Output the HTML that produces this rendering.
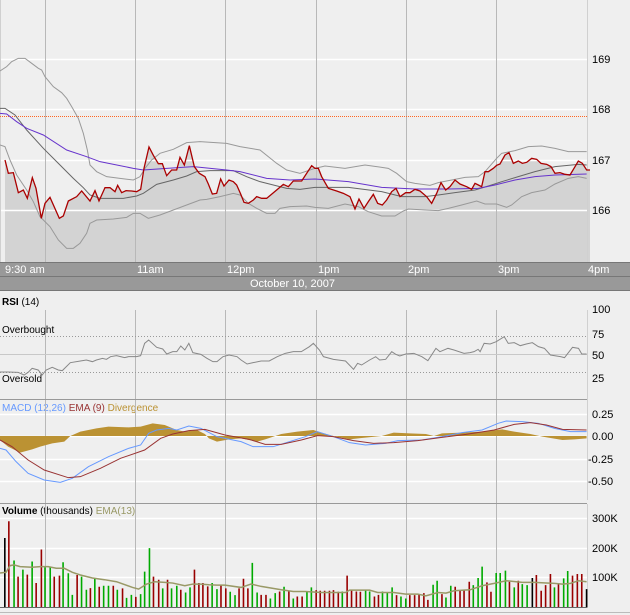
<!DOCTYPE html>
<html><head><meta charset="utf-8"><style>
html,body{margin:0;padding:0;background:#efefef;}
svg{display:block;font-family:"Liberation Sans",sans-serif;}
</style></head><body>
<svg width="630" height="615" viewBox="0 0 630 615" xmlns="http://www.w3.org/2000/svg">
<rect width="630" height="615" fill="#efefef"/>
<!-- main price area fill -->
<g transform="scale(0.33333)">
<polygon fill="#d3d3d3" points="15,786 15,480 25,520 40,518 55,578 70,570 82,595 97,533 108,565 124,655 135,610 150,592 178,655 190,648 205,603 230,590 245,573 270,603 285,572 297,603 315,563 330,563 345,575 353,556 365,578 378,572 395,573 410,575 422,568 432,505 447,441 460,466 475,491 487,491 500,527 515,510 530,510 540,472 553,495 568,437 583,500 598,520 615,530 625,552 637,582 650,580 662,537 672,558 687,540 700,545 710,555 722,582 732,607 745,610 760,600 770,590 785,595 800,595 830,570 850,553 865,560 880,543 905,543 935,497 945,505 955,505 965,530 985,565 1010,573 1030,580 1050,590 1065,627 1077,597 1092,625 1105,605 1120,583 1133,610 1147,615 1160,600 1175,575 1188,565 1200,590 1217,578 1230,578 1245,568 1260,573 1280,590 1295,610 1310,580 1323,548 1337,570 1350,560 1365,540 1380,552 1400,560 1415,568 1425,550 1435,555 1445,560 1455,515 1465,515 1480,505 1490,496 1500,492 1515,465 1527,458 1540,490 1555,483 1567,490 1580,487 1595,475 1610,478 1623,490 1640,493 1653,500 1665,520 1680,518 1695,523 1710,525 1725,500 1735,483 1747,490 1760,510 1770,510 1770,786"/>
</g>
<!-- grid -->
<g stroke="#ffffff" stroke-width="1.5">
<line x1="0" y1="59.5" x2="587" y2="59.5"/><line x1="0" y1="109.5" x2="587" y2="109.5"/><line x1="0" y1="160.5" x2="587" y2="160.5"/><line x1="0" y1="210.5" x2="587" y2="210.5"/>
</g>
<g stroke="#b8b8b8" stroke-width="1">
<line x1="45.5" y1="0" x2="45.5" y2="262"/><line x1="135.5" y1="0" x2="135.5" y2="262"/><line x1="225.5" y1="0" x2="225.5" y2="262"/><line x1="316.5" y1="0" x2="316.5" y2="262"/><line x1="406.5" y1="0" x2="406.5" y2="262"/><line x1="496.5" y1="0" x2="496.5" y2="262"/><line x1="587.5" y1="0" x2="587.5" y2="262" stroke="#d0d0d0"/>
<line x1="0.5" y1="0" x2="0.5" y2="262" stroke="#d0d0d0"/>
</g>
<line x1="0" y1="116.5" x2="587" y2="116.5" stroke="#ff6622" stroke-dasharray="1,1"/>
<g transform="scale(0.33333)" fill="none" stroke-width="1" vector-effect="non-scaling-stroke">
<polyline vector-effect="non-scaling-stroke" stroke="#999" points="0,213 20,200 35,185 55,175 75,175 95,190 115,205 125,210 135,230 160,260 185,278 200,295 215,320 235,355 250,400 262,450 270,495 290,515 320,530 360,535 400,540 420,530 435,505 455,480 480,460 520,448 560,428 600,425 680,430 720,440 780,450 830,490 860,510 900,520 945,505 975,498 1035,505 1095,495 1165,505 1190,520 1220,545 1245,550 1290,556 1315,548 1355,540 1395,532 1435,530 1455,515 1490,475 1505,460 1545,452 1585,440 1625,438 1665,445 1705,455 1760,455"/>
<polyline vector-effect="non-scaling-stroke" stroke="#999" points="0,435 15,440 30,480 50,525 80,570 100,605 120,650 150,680 175,720 200,745 220,745 240,730 260,700 270,670 290,660 340,657 380,652 400,640 420,640 445,655 480,645 520,630 560,615 600,600 620,598 660,590 700,580 720,585 745,610 770,625 800,640 825,640 840,625 870,620 920,618 945,622 985,625 1035,612 1075,620 1105,635 1145,648 1185,648 1210,633 1225,627 1275,630 1315,632 1345,625 1385,615 1430,603 1455,612 1490,612 1520,622 1535,615 1565,590 1595,578 1635,570 1665,552 1705,535 1735,530 1760,535"/>
<polyline vector-effect="non-scaling-stroke" stroke="#666" points="0,325 15,325 45,345 80,390 130,445 180,495 220,535 250,563 270,585 300,595 370,595 410,588 430,580 470,553 520,540 560,528 590,515 630,512 700,512 740,530 780,545 820,555 860,565 900,568 945,562 1045,562 1145,575 1205,590 1275,590 1315,585 1365,578 1425,570 1465,558 1505,545 1555,530 1605,515 1665,500 1735,493 1760,495"/>
<polyline vector-effect="non-scaling-stroke" stroke="#6633cc" points="0,340 20,342 50,365 80,385 130,405 200,450 260,470 300,485 400,505 430,510 500,505 580,500 680,510 720,515 800,535 870,540 945,537 1045,545 1145,562 1245,567 1345,567 1435,565 1485,555 1545,540 1605,530 1665,525 1760,522"/>
<polyline vector-effect="non-scaling-stroke" stroke="#aa0000" stroke-width="1.3" points="15,480 25,520 40,518 55,578 70,570 82,595 97,533 108,565 124,655 135,610 150,592 178,655 190,648 205,603 230,590 245,573 270,603 285,572 297,603 315,563 330,563 345,575 353,556 365,578 378,572 395,573 410,575 422,568 432,505 447,441 460,466 475,491 487,491 500,527 515,510 530,510 540,472 553,495 568,437 583,500 598,520 615,530 625,552 637,582 650,580 662,537 672,558 687,540 700,545 710,555 722,582 732,607 745,610 760,600 770,590 785,595 800,595 830,570 850,553 865,560 880,543 905,543 935,497 945,505 955,505 965,530 985,565 1010,573 1030,580 1050,590 1065,627 1077,597 1092,625 1105,605 1120,583 1133,610 1147,615 1160,600 1175,575 1188,565 1200,590 1217,578 1230,578 1245,568 1260,573 1280,590 1295,610 1310,580 1323,548 1337,570 1350,560 1365,540 1380,552 1400,560 1415,568 1425,550 1435,555 1445,560 1455,515 1465,515 1480,505 1490,496 1500,492 1515,465 1527,458 1540,490 1555,483 1567,490 1580,487 1595,475 1610,478 1623,490 1640,493 1653,500 1665,520 1680,518 1695,523 1710,525 1725,500 1735,483 1747,490 1760,510 1770,510"/>
</g>
<g font-size="11" fill="#000"><text x="592" y="63">169</text><text x="592" y="113">168</text><text x="592" y="164">167</text><text x="592" y="214">166</text></g>
<!-- time axis -->
<rect x="0" y="262" width="630" height="14" fill="#999"/>
<rect x="0" y="276" width="630" height="14" fill="#999"/>
<line x1="0" y1="262.5" x2="630" y2="262.5" stroke="#777"/>
<line x1="0" y1="276.5" x2="630" y2="276.5" stroke="#777"/>
<line x1="0" y1="290.5" x2="630" y2="290.5" stroke="#777"/>
<g font-size="11" fill="#fff"><text x="5" y="273">9:30 am</text><text x="137" y="273">11am</text><text x="227" y="273">12pm</text><text x="318" y="273">1pm</text><text x="408" y="273">2pm</text><text x="498" y="273">3pm</text><text x="588" y="273">4pm</text><text x="250" y="287">October 10, 2007</text></g>
<!-- RSI -->
<text x="2" y="305" font-size="10"><tspan font-weight="bold">RSI</tspan> (14)</text>
<g stroke="#b8b8b8"><line x1="45.5" y1="310" x2="45.5" y2="399"/><line x1="135.5" y1="310" x2="135.5" y2="399"/><line x1="225.5" y1="310" x2="225.5" y2="399"/><line x1="316.5" y1="310" x2="316.5" y2="399"/><line x1="406.5" y1="310" x2="406.5" y2="399"/><line x1="496.5" y1="310" x2="496.5" y2="399"/><line x1="587.5" y1="310" x2="587.5" y2="500" stroke="#d0d0d0"/></g>
<line x1="0" y1="336.5" x2="587" y2="336.5" stroke="#999" stroke-dasharray="1,2"/>
<line x1="0" y1="372.5" x2="587" y2="372.5" stroke="#999" stroke-dasharray="1,2"/>
<line x1="0" y1="354.5" x2="587" y2="354.5" stroke="#c8c8c8"/>
<line x1="0" y1="399.5" x2="587" y2="399.5" stroke="#999"/>
<text x="2" y="333" font-size="10">Overbought</text><text x="2" y="382" font-size="10">Oversold</text>
<g font-size="11"><text x="592" y="313">100</text><text x="592" y="338">75</text><text x="592" y="359">50</text><text x="592" y="382">25</text></g>
<g transform="translate(0,290) scale(0.40177,0.33333)"><polyline vector-effect="non-scaling-stroke" fill="none" stroke="#888" points="0,246 20,246 45,247 60,255 70,247 80,235 95,240 105,255 115,240 130,232 145,240 155,242 175,218 200,213 215,210 230,215 240,210 255,205 265,208 275,200 290,197 300,200 310,203 320,200 340,200 350,197 360,160 370,150 390,172 405,177 415,192 430,185 440,185 450,168 460,180 470,160 480,188 500,193 515,205 530,215 540,215 555,200 570,195 590,200 600,210 615,222 630,218 650,213 670,213 690,200 710,190 730,185 750,185 770,170 780,160 795,180 805,200 830,208 860,213 880,238 890,220 900,225 920,210 935,200 945,210 960,208 975,185 985,193 995,198 1010,192 1030,190 1050,200 1065,212 1085,175 1095,185 1115,175 1130,180 1155,190 1170,188 1180,185 1190,178 1195,185 1205,160 1220,162 1235,155 1255,140 1265,160 1280,158 1295,167 1310,162 1325,158 1340,170 1355,175 1370,195 1395,200 1405,203 1425,172 1440,175 1448,192 1460,192"/></g>
<!-- MACD -->
<text x="2" y="411" font-size="10"><tspan fill="#6699ff">MACD (12,26)</tspan> <tspan fill="#993333">EMA (9)</tspan> <tspan fill="#bb9233">Divergence</tspan></text>
<g stroke="#fff" stroke-width="1.5"><line x1="0" y1="414.5" x2="587" y2="414.5"/><line x1="0" y1="436.5" x2="587" y2="436.5"/><line x1="0" y1="459.5" x2="587" y2="459.5"/><line x1="0" y1="481.5" x2="587" y2="481.5"/></g>
<g stroke="#b8b8b8"><line x1="45.5" y1="400" x2="45.5" y2="503"/><line x1="135.5" y1="400" x2="135.5" y2="503"/><line x1="225.5" y1="400" x2="225.5" y2="503"/><line x1="316.5" y1="400" x2="316.5" y2="503"/><line x1="406.5" y1="400" x2="406.5" y2="503"/><line x1="496.5" y1="400" x2="496.5" y2="503"/></g>
<g font-size="11"><text x="592" y="418">0.25</text><text x="592" y="440">0.00</text><text x="588" y="463">-0.25</text><text x="588" y="485">-0.50</text></g>
<g transform="translate(0,290) scale(0.40177,0.33333)">
<polygon fill="#bb9233" points="0,438 0,450 20,470 50,488 80,478 100,470 130,460 160,455 175,438 200,425 240,415 270,410 320,412 350,410 380,400 410,405 440,420 460,425 490,420 510,432 520,445 540,455 570,448 600,445 640,455 660,448 700,432 740,425 780,420 800,428 830,438 870,448 900,444 950,438 980,428 1020,430 1060,432 1080,438 1100,430 1150,428 1200,425 1250,418 1280,425 1320,432 1350,440 1400,450 1430,448 1460,445 1460,438"/>
<polyline vector-effect="non-scaling-stroke" fill="none" stroke="#6699ff" points="0,475 15,480 40,515 70,550 110,570 150,577 180,565 220,530 270,500 320,475 350,465 370,430 390,420 420,415 440,420 470,408 500,415 540,440 560,445 600,455 630,470 680,470 720,455 760,440 790,425 830,440 870,458 910,465 960,460 990,452 1050,450 1100,440 1150,428 1200,420 1240,400 1260,393 1300,395 1340,400 1380,415 1420,425 1460,425"/>
<polyline vector-effect="non-scaling-stroke" fill="none" stroke="#993333" points="0,450 30,470 70,510 110,540 170,563 200,560 250,535 300,505 360,480 400,445 430,432 470,422 510,418 560,435 620,448 660,463 700,463 750,450 790,437 830,440 880,452 930,460 980,458 1040,452 1100,442 1160,433 1230,420 1280,403 1320,398 1360,405 1400,418 1460,420"/>
</g>
<line x1="0" y1="503.5" x2="587" y2="503.5" stroke="#999"/>
<!-- Volume -->
<text x="2" y="514" font-size="10"><tspan font-weight="bold">Volume</tspan> (thousands) <tspan fill="#999966">EMA(13)</tspan></text>
<g stroke="#fff" stroke-width="1.5"><line x1="0" y1="518.5" x2="587" y2="518.5"/><line x1="0" y1="548.5" x2="587" y2="548.5"/><line x1="0" y1="577.5" x2="587" y2="577.5"/></g>
<g stroke="#b8b8b8"><line x1="45.5" y1="504" x2="45.5" y2="607"/><line x1="135.5" y1="504" x2="135.5" y2="607"/><line x1="225.5" y1="504" x2="225.5" y2="607"/><line x1="316.5" y1="504" x2="316.5" y2="607"/><line x1="406.5" y1="504" x2="406.5" y2="607"/><line x1="496.5" y1="504" x2="496.5" y2="607"/><line x1="587.5" y1="504" x2="587.5" y2="607" stroke="#d0d0d0"/></g>
<g font-size="11"><text x="592" y="522">300K</text><text x="592" y="552">200K</text><text x="592" y="581">100K</text></g>
<g transform="translate(0,495) scale(0.40177,0.3361)" stroke-width="1.6">
<g stroke="#000"><path vector-effect="non-scaling-stroke" d="M12 335V128M1325 335V247M1460 335V280"/></g>
<g stroke="#990000"><path vector-effect="non-scaling-stroke" d="M22 335V78M45 335V243M68 335V237M90 335V262M103 335V162M135 335V243M148 335V240M192 335V238M225 335V277M247 335V273M282 335V270M305 335V278M338 335V303M382 335V243M395 335V252M417 335V252M450 335V282M484 335V222M495 335V262M505 335V262M517 335V272M550 335V268M562 335V278M595 335V278M606 335V249M617 335V278M650 335V297M662 335V297M696 335V287M719 335V285M740 335V302M752 335V302M787 335V283M797 335V285M808 335V285M820 335V285M830 335V283M842 335V288M864 335V240M875 335V283M887 335V287M897 335V288M932 335V302M942 335V297M987 335V298M1020 335V298M1032 335V298M1043 335V297M1055 335V292M1065 335V312M1100 335V295M1133 335V273M1145 335V283M1155 335V283M1168 335V258M1212 335V260M1222 335V288M1268 335V258M1290 335V255M1335 335V238M1347 335V285M1358 335V268M1370 335V235M1390 335V263M1425 335V240M1437 335V235M1448 335V235"/></g>
<g stroke="#00aa00"><path vector-effect="non-scaling-stroke" d="M35 335V195M57 335V222M80 335V198M112 335V215M125 335V215M157 335V200M170 335V233M180 335V297M203 335V243M215 335V282M236 335V248M258 335V270M270 335V270M292 335V282M315 335V306M327 335V297M350 335V295M360 335V228M372 335V158M405 335V278M427 335V278M440 335V270M462 335V290M473 335V275M528 335V262M540 335V280M573 335V288M585 335V298M628 335V202M640 335V290M673 335V308M685 335V292M707 335V273M730 335V308M764 335V287M775 335V275M852 335V287M910 335V283M920 335V287M952 335V287M964 335V290M976 335V275M998 335V302M1010 335V308M1078 335V267M1088 335V255M1110 335V305M1122 335V270M1178 335V268M1190 335V247M1200 335V213M1235 335V232M1245 335V232M1258 335V225M1280 335V275M1300 335V265M1312 335V268M1380 335V275M1403 335V248M1413 335V226"/></g>
<polyline vector-effect="non-scaling-stroke" fill="none" stroke="#999966" stroke-width="1.5" points="0,232 15,230 25,210 35,208 50,213 80,215 100,213 120,213 140,218 160,218 180,230 200,238 230,247 260,252 290,258 330,275 345,280 365,265 385,258 410,260 430,262 460,270 480,265 500,265 520,267 540,268 560,268 600,275 625,265 650,272 700,282 730,287 760,287 800,290 860,290 870,283 920,283 940,290 980,290 1010,295 1040,295 1060,300 1090,290 1110,292 1130,285 1170,282 1200,270 1230,263 1260,255 1300,260 1330,260 1360,262 1380,263 1400,265 1420,263 1440,255 1460,258"/>
</g>
<line x1="0" y1="607.5" x2="587" y2="607.5" stroke="#666"/>
<line x1="0" y1="612.5" x2="630" y2="612.5" stroke="#bbb"/>
</svg>
</body></html>
